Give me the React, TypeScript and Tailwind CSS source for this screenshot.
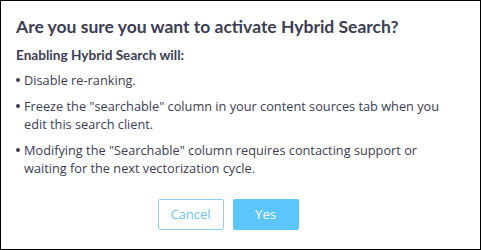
import React from 'react'

const items = [
  'Disable re-ranking.',
  'Freeze the "searchable" column in your content sources tab when you edit this search client.',
  'Modifying the "Searchable" column requires contacting support or waiting for the next vectorization cycle.',
]

export default function App() {
  return (
    <div
      className="w-[481px] h-[250px] border border-black bg-white px-[15px] pt-[14px] text-[#3c3d52]"
      style={{ fontFamily: '"Open Sans", "Liberation Sans", sans-serif' }}
    >
      <h2 className="font-['Lato',sans-serif] text-[17.5px] leading-[24px] font-bold">
        Are you sure you want to activate Hybrid Search?
      </h2>
      <p className="mt-[6px] font-['Lato',sans-serif] text-[13.6px] leading-[20px] font-bold">
        Enabling Hybrid Search will:
      </p>
      <ul className="mt-[6px] flex flex-col gap-[8px] text-[12.75px] leading-[18px]">
        {items.map((t) => (
          <li key={t} className="flex">
            <span className="mt-[7px] mr-[4px] w-[4px] h-[4px] shrink-0 rounded-full bg-[#3c3d52]" />
            <span className="max-w-[425px]">{t}</span>
          </li>
        ))}
      </ul>
      <div className="mt-[22px] flex justify-center gap-[9px] pr-[25px]">
        <button className="w-[66px] h-[31px] rounded-[2px] border border-[#8ed3f0] bg-white text-[13px] font-medium text-[#6cc3ef]">
          Cancel
        </button>
        <button className="w-[66px] h-[31px] rounded-[2px] bg-[#5cc6fa] text-[13px] font-medium text-white">
          Yes
        </button>
      </div>
    </div>
  )
}
